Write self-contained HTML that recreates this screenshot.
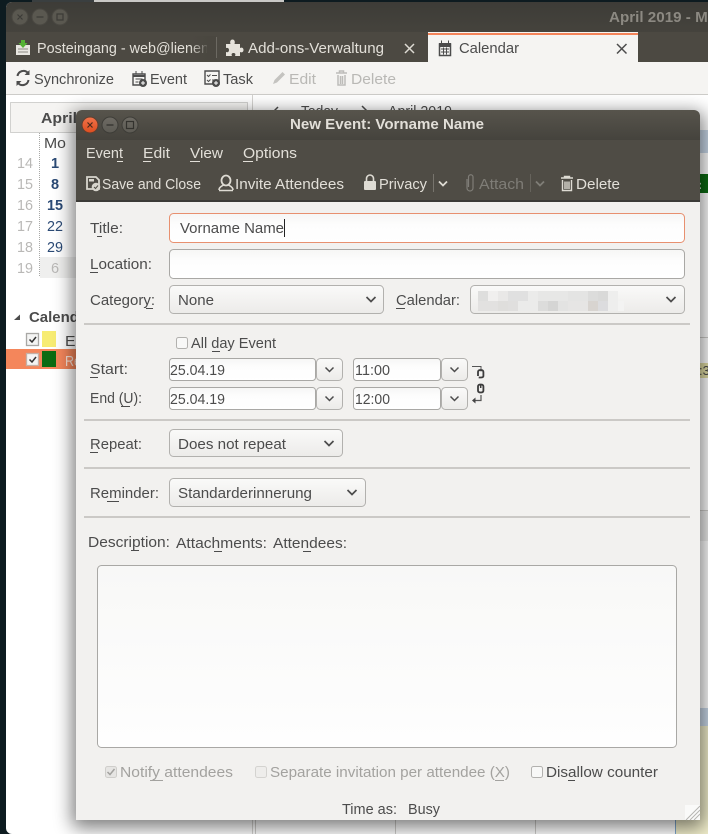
<!DOCTYPE html>
<html lang="en"><head><meta charset="utf-8"><title>New Event</title>
<style>
html,body{margin:0;padding:0;background:#0d1b20;width:708px;height:834px;overflow:hidden}
svg{display:block}
text{font-family:"Liberation Sans",sans-serif;font-size:14.5px;fill:#4c4c4c;white-space:pre}
.b{font-weight:bold}
.m{fill:#e2dfd8}
.d{fill:#a3a29f}
.dd{fill:#7f7d77}
.day{fill:#2b4a75}
.wk{fill:#b9b8b6}
.u{fill:#4c4c4c}
.um{fill:#e2dfd8}
.sep{fill:#cbc9c6}
.ic{fill:none;stroke:#4c4c4c;stroke-width:1.4}
.icm{fill:none;stroke:#dedbd3;stroke-width:1.4}
</style></head><body>
<svg width="708" height="834" viewBox="0 0 708 834" xmlns="http://www.w3.org/2000/svg">
<defs>
<linearGradient id="tb" x1="0" y1="0" x2="0" y2="1"><stop offset="0" stop-color="#57544c"/><stop offset="1" stop-color="#45433d"/></linearGradient>
<linearGradient id="tm" x1="0" y1="0" x2="0" y2="1"><stop offset="0" stop-color="#3d3c37"/><stop offset="1" stop-color="#45433d"/></linearGradient>
<linearGradient id="inp" x1="0" y1="0" x2="0" y2="1"><stop offset="0" stop-color="#f6f6f5"/><stop offset=".4" stop-color="#fdfdfd"/><stop offset="1" stop-color="#fff"/></linearGradient>
<linearGradient id="ta" x1="0" y1="0" x2="0" y2="1"><stop offset="0" stop-color="#f8f8f7"/><stop offset="1" stop-color="#fefefe"/></linearGradient>
<linearGradient id="btn" x1="0" y1="0" x2="0" y2="1"><stop offset="0" stop-color="#fafaf9"/><stop offset="1" stop-color="#ecebe9"/></linearGradient>
<linearGradient id="cl" x1="0" y1="0" x2="0" y2="1"><stop offset="0" stop-color="#f3734a"/><stop offset="1" stop-color="#dc4d1f"/></linearGradient>
<linearGradient id="gb" x1="0" y1="0" x2="0" y2="1"><stop offset="0" stop-color="#6e6b64"/><stop offset="1" stop-color="#5c5a53"/></linearGradient>
<linearGradient id="fade" x1="0" y1="0" x2="1" y2="0"><stop offset="0" stop-color="#4a4740" stop-opacity="0"/><stop offset="1" stop-color="#4a4740"/></linearGradient>
<filter id="sh" x="-10%" y="-10%" width="120%" height="120%"><feGaussianBlur stdDeviation="9"/></filter>
</defs>

<!-- desktop / main window -->
<rect width="708" height="834" fill="#0d1b20"/>
<rect x="32" y="0" width="62" height="2" fill="#3a3f40"/><rect x="94" y="0" width="190" height="2" fill="#c9c9c6"/>
<rect x="6" y="2" width="702" height="832" rx="6" fill="#fff"/>
<path d="M6 32V8a6 6 0 0 1 6-6H708V32Z" fill="url(#tm)"/>
<rect x="6" y="32" width="702" height="30" fill="#4c4942"/>
<g fill="#5a5850" stroke="#4a4842"><circle cx="20" cy="17" r="8"/><circle cx="40" cy="17" r="8"/><circle cx="60" cy="17" r="8"/></g>
<path d="M17.500 14.500l5 5M22.500 14.500l-5 5M36.500 17h7M57 14h6v6h-6z" fill="none" stroke="#3c3b37" stroke-width="1.200"/>
<text x="609" y="22" class="b" style="fill:#8c8982" textLength="108" lengthAdjust="spacingAndGlyphs">April 2019 - Mo</text>

<!-- tabs -->
<path d="M16 45h14v10H16z" fill="#e8e6e1"/><path d="M18 49h10M18 52h10" stroke="#8c8a84"/><path d="M21 40h4v3h2.500L23 48l-4.500-5H21z" fill="#55b235"/>
<text x="37" y="53" class="m" textLength="172" lengthAdjust="spacingAndGlyphs">Posteingang - web@lienen</text>
<rect x="190" y="36" width="20" height="24" fill="url(#fade)"/><rect x="207" y="36" width="9" height="24" fill="#4a4740"/>
<rect x="216" y="37" width="1" height="21" fill="#6c6962"/>
<path d="M226 44h4.500c-1-3 .5-4.500 2-4.500s3 1.500 2 4.500H240v4c2.500-1 3.500.5 3.500 2s-1 3-3.500 2v4h-5c1-2 0-3-1.500-3s-2.500 1-1.500 3H226v-4c2 .7 3-.3 3-2s-1-2.500-3-2z" fill="#e6e3dc"/>
<text x="248" y="53" class="m" textLength="136" lengthAdjust="spacingAndGlyphs">Add-ons-Verwaltung</text>
<path d="M405 44l9 9M414 44l-9 9" stroke="#dedbd3" stroke-width="1.500" fill="none"/>
<rect x="428" y="32" width="210" height="30" fill="#f5f4f2"/><rect x="428" y="33" width="210" height="2" fill="#f4845a"/>
<path d="M439.500 44h11v11.500h-11z" fill="none" stroke="#4c4c4c" stroke-width="1.500"/><rect x="439" y="43" width="12" height="4" fill="#4c4c4c"/><path d="M441 49h8M441 52h8M443.500 47.500v7M446.500 47.500v7M441.500 40.500v3M448.500 40.500v3" stroke="#4c4c4c" fill="none"/>
<text x="459" y="53" textLength="60" lengthAdjust="spacingAndGlyphs">Calendar</text>
<path d="M617 44l9.500 9.500M626.500 44l-9.500 9.500" stroke="#4c4c4c" stroke-width="1.500" fill="none"/>

<!-- main toolbar -->
<rect x="6" y="62" width="702" height="32" fill="#f5f4f2"/><rect x="6" y="94" width="702" height="1" fill="#cdccc9"/>
<path d="M17.500 76a6 6 0 0 1 10.500-3M28.500 80a6 6 0 0 1-10.500 3" class="ic" style="stroke-width:2"/><path d="M29.500 70v5h-5zM16.500 86v-5h5z" fill="#4c4c4c"/>
<text x="34" y="84" textLength="80" lengthAdjust="spacingAndGlyphs">Synchronize</text>
<path d="M133 74h12v11h-12z" class="ic"/><path d="M133 76h12" stroke="#4c4c4c" stroke-width="2"/><path d="M136 71v3M142 71v3M135.500 79h7M135.500 82h3" stroke="#4c4c4c"/><circle cx="143" cy="83" r="4" fill="#4c4c4c"/><path d="M141 83h4M143 81v4" stroke="#fff"/>
<text x="150" y="84" textLength="37" lengthAdjust="spacingAndGlyphs">Event</text>
<path d="M205 71h14v13h-14z" class="ic"/><path d="M207 75l1.500 1.500 2-2M212 75.500h5M207 80l1.500 1.500 2-2M212 80h3" stroke="#4c4c4c" fill="none"/><circle cx="216" cy="83" r="4" fill="#4c4c4c"/><path d="M214 83h4M216 81v4" stroke="#fff"/>
<text x="223" y="84" textLength="30" lengthAdjust="spacingAndGlyphs">Task</text>
<path d="M273 84l1.500-4 8-8 2.500 2.500-8 8z" fill="#c4c3c0"/>
<text x="289" y="84" style="fill:#b9b8b5" textLength="27" lengthAdjust="spacingAndGlyphs">Edit</text>
<path d="M336 73h11M338 75v10h7V75M340.500 76v8M342.500 76v8M339.500 73v-2h4v2" fill="none" stroke="#bdbcb9" stroke-width="1.500"/>
<text x="351" y="84" style="fill:#b9b8b5" textLength="45" lengthAdjust="spacingAndGlyphs">Delete</text>

<!-- sidebar -->
<rect x="252" y="95" width="1" height="739" fill="#d4d3d0"/>
<rect x="10.500" y="102.500" width="237" height="30" fill="#f5f4f2" stroke="#a8a8a6" stroke-dasharray="1 1"/>
<text x="41" y="123" class="b" textLength="36" lengthAdjust="spacingAndGlyphs">April</text>
<path d="M39.500 133V277" stroke="#a8a8a6" stroke-dasharray="1 1"/>
<rect x="40" y="257" width="40" height="21" fill="#efefee"/>
<text x="44" y="148" textLength="22" lengthAdjust="spacingAndGlyphs">Mo</text>
<text x="17" y="168" class="wk" textLength="16" lengthAdjust="spacingAndGlyphs">14</text>
<text x="17" y="189" class="wk" textLength="16" lengthAdjust="spacingAndGlyphs">15</text>
<text x="17" y="210" class="wk" textLength="16" lengthAdjust="spacingAndGlyphs">16</text>
<text x="17" y="231" class="wk" textLength="16" lengthAdjust="spacingAndGlyphs">17</text>
<text x="17" y="252" class="wk" textLength="16" lengthAdjust="spacingAndGlyphs">18</text>
<text x="17" y="273" class="wk" textLength="16" lengthAdjust="spacingAndGlyphs">19</text>
<text x="51" y="168" class="b day">1</text>
<text x="51" y="189" class="b day">8</text>
<text x="47" y="210" class="b day" textLength="16" lengthAdjust="spacingAndGlyphs">15</text>
<text x="47" y="231" class="day" textLength="16" lengthAdjust="spacingAndGlyphs">22</text>
<text x="47" y="252" class="day" textLength="16" lengthAdjust="spacingAndGlyphs">29</text>
<text x="51" y="273" class="wk">6</text>
<path d="M14 320l6-5.500V320z" fill="#4c4c4c"/>
<text x="29" y="322" class="b" textLength="64" lengthAdjust="spacingAndGlyphs">Calendar</text>
<rect x="26.500" y="333.500" width="12" height="12" fill="#f4f4f3" stroke="#a9a8a5" stroke-width="1.300"/>
<path d="M29.500 339.500l2.500 2.500 4-5" fill="none" stroke="#333" stroke-width="1.500"/>
<rect x="42" y="331" width="14" height="16" fill="#f7ec73"/>
<text x="65" y="346" textLength="14" lengthAdjust="spacingAndGlyphs">El</text>
<rect x="6" y="349" width="100" height="20" fill="#f4865b"/>
<rect x="26.500" y="353.500" width="12" height="12" fill="#f4f4f3" stroke="#c4b0a6" stroke-width="1.300"/>
<path d="M29.500 359.500l2.500 2.500 4-5" fill="none" stroke="#333" stroke-width="1.500"/>
<rect x="42" y="351" width="14" height="16" fill="#0b6b12"/>
<text x="65" y="366" style="fill:#fbe4d9" textLength="16" lengthAdjust="spacingAndGlyphs">Re</text>

<!-- calendar pane -->
<path d="M274 111l4-4M362 106l5 5-5 5" fill="none" stroke="#4c4c4c" stroke-width="1.500"/>
<text x="301" y="116" textLength="37" lengthAdjust="spacingAndGlyphs">Today</text>
<text x="388" y="116" textLength="64" lengthAdjust="spacingAndGlyphs">April 2019</text>
<rect x="253" y="130" width="455" height="23" fill="#c9d8e8"/>
<rect x="253" y="174" width="455" height="19" fill="#0b6b12"/>
<text x="698" y="189" style="fill:#e9efe6;font-size:12px" class="b">:</text>
<rect x="253" y="337" width="455" height="1" fill="#cfcecb"/>
<rect x="600" y="363" width="108" height="15" fill="#e3dfa6"/>
<text x="699" y="375" style="font-size:13px">:3</text>
<rect x="253" y="510" width="455" height="1" fill="#cfcecb"/>
<rect x="253" y="511" width="455" height="30" fill="#efefee"/>
<rect x="253" y="708" width="455" height="18" fill="#c9d8e8"/>
<rect x="676" y="726" width="32" height="108" fill="#f1eecb"/>
<path d="M255.500 700V834M395.500 700V834M535.500 700V834" stroke="#cfcecb"/>
<path d="M675.500 700V834" stroke="#7ea6cc"/>

<!-- dialog shadow -->
<rect x="72" y="112" width="632" height="716" rx="6" fill="#000" opacity=".5" filter="url(#sh)"/>

<!-- dialog -->
<path d="M76 820V116a6 6 0 0 1 6-6H694a6 6 0 0 1 6 6V820Z" fill="#f2f1ef"/>
<path d="M76 140V116a6 6 0 0 1 6-6H694a6 6 0 0 1 6 6V140Z" fill="url(#tb)"/>
<rect x="76" y="140" width="624" height="61" fill="#4f4c45"/>
<rect x="76" y="200" width="624" height="2" fill="#3c3b37"/>
<circle cx="90" cy="125" r="8" fill="url(#cl)" stroke="#5d3f31"/><path d="M87.500 122.500l5 5M92.500 122.500l-5 5" stroke="#4a2a1c" stroke-width="1.200"/>
<circle cx="110" cy="125" r="8" fill="url(#gb)" stroke="#3e3d38"/><path d="M106.500 125h7" stroke="#33322e" stroke-width="1.300"/>
<circle cx="130" cy="125" r="8" fill="url(#gb)" stroke="#3e3d38"/><rect x="126.500" y="121.500" width="7" height="7" fill="none" stroke="#33322e" stroke-width="1.200"/>
<text x="290" y="129" class="b m" textLength="194" lengthAdjust="spacingAndGlyphs">New Event: Vorname Name</text>

<text x="86" y="158" class="m" textLength="37" lengthAdjust="spacingAndGlyphs">Event</text><rect x="117" y="161" width="6" height="1" class="um"/>
<text x="143" y="158" class="m" textLength="27" lengthAdjust="spacingAndGlyphs">Edit</text><rect x="143" y="161" width="8" height="1" class="um"/>
<text x="190" y="158" class="m" textLength="33" lengthAdjust="spacingAndGlyphs">View</text><rect x="190" y="161" width="10" height="1" class="um"/>
<text x="243" y="158" class="m" textLength="54" lengthAdjust="spacingAndGlyphs">Options</text><rect x="243" y="161" width="10" height="1" class="um"/>

<path d="M87 177h9l3 3v9H87z" fill="none" stroke="#d8d5cd" stroke-width="1.800"/><rect x="89" y="179" width="5" height="2.500" fill="#d8d5cd"/><circle cx="96" cy="187" r="4.300" fill="#d8d5cd"/><path d="M94 187l1.500 1.500 2.500-3" stroke="#4f4c45" fill="none"/>
<text x="102" y="189" class="m" textLength="99" lengthAdjust="spacingAndGlyphs">Save and Close</text>
<ellipse cx="226" cy="180.500" rx="4.500" ry="5" class="icm" style="stroke-width:1.800"/><path d="M219 190c0-3 3-4 4.500-5M233 190c0-3-3-4-4.500-5M219 190.500h14" class="icm" style="stroke-width:1.600"/>
<text x="235" y="189" class="m" textLength="109" lengthAdjust="spacingAndGlyphs">Invite Attendees</text>
<rect x="364" y="181" width="12" height="9" rx="1" fill="#dedbd3"/><path d="M366.500 181v-2.500a3.500 3.500 0 0 1 7 0V181" fill="none" stroke="#dedbd3" stroke-width="1.600"/>
<text x="379" y="189" class="m" textLength="48" lengthAdjust="spacingAndGlyphs">Privacy</text>
<rect x="433" y="174" width="1" height="18" fill="#77746d"/>
<path d="M439 181.500l4 4 4-4" class="icm" style="stroke-width:1.800"/>
<path d="M467 179v9a3 3 0 0 0 6 0v-11a2.200 2.200 0 0 0-4.500 0v10" fill="none" stroke="#7f7d77" stroke-width="1.200"/>
<text x="479" y="189" class="dd" textLength="45" lengthAdjust="spacingAndGlyphs">Attach</text>
<rect x="530" y="174" width="1" height="18" fill="#66635c"/>
<path d="M536 181.500l4 4 4-4" fill="none" stroke="#7f7d77" stroke-width="1.800"/>
<path d="M561 178h12M562.500 180v10.500h9V180M565 181.500v7.500M567 181.500v7.500M569 181.500v7.500M564.500 178v-1.500h5v1.500" class="icm"/>
<text x="576" y="189" class="m" textLength="44" lengthAdjust="spacingAndGlyphs">Delete</text>

<!-- form -->
<text x="90" y="233" textLength="33" lengthAdjust="spacingAndGlyphs">Title:</text><rect x="97" y="236" width="5" height="1" class="u"/>
<rect x="169.500" y="213.500" width="515" height="29" rx="4" fill="url(#inp)" stroke="#e8906f"/>
<text x="180" y="233" textLength="104" lengthAdjust="spacingAndGlyphs">Vorname Name</text>
<rect x="284" y="219" width="1" height="18" fill="#222"/>

<text x="90" y="269" textLength="62" lengthAdjust="spacingAndGlyphs">Location:</text><rect x="90" y="272" width="8" height="1" class="u"/>
<rect x="169.500" y="249.500" width="515" height="29" rx="4" fill="url(#inp)" stroke="#a9a8a5"/>

<text x="90" y="305" textLength="65" lengthAdjust="spacingAndGlyphs">Category:</text><rect x="146" y="308" width="7" height="1" class="u"/>
<rect x="169.500" y="285.500" width="214" height="28" rx="4" fill="url(#btn)" stroke="#b2b1ae"/>
<text x="178" y="305" textLength="36" lengthAdjust="spacingAndGlyphs">None</text>
<path d="M366.500 297l4.500 4.500 4.500-4.500" fill="none" stroke="#4c4c4c" stroke-width="1.700"/>
<text x="396" y="305" textLength="64" lengthAdjust="spacingAndGlyphs">Calendar:</text><rect x="396" y="308" width="9" height="1" class="u"/>
<rect x="470.500" y="285.500" width="214" height="28" rx="4" fill="url(#btn)" stroke="#b2b1ae"/>
<g>
<rect x="478" y="291" width="10" height="10" fill="#dededd"/><rect x="488" y="291" width="10" height="10" fill="#f0efee"/><rect x="498" y="291" width="10" height="10" fill="#e9e8e7"/><rect x="508" y="291" width="20" height="10" fill="#e0e0e0"/><rect x="528" y="291" width="10" height="10" fill="#ebebea"/><rect x="538" y="291" width="30" height="10" fill="#e7e7e6"/><rect x="568" y="291" width="20" height="10" fill="#e4e4e3"/><rect x="588" y="291" width="10" height="10" fill="#dcdcdb"/><rect x="598" y="291" width="10" height="10" fill="#d9d9d8"/><rect x="608" y="291" width="10" height="10" fill="#eeeeed"/>
<rect x="478" y="301" width="20" height="10" fill="#e2e1e0"/><rect x="498" y="301" width="10" height="10" fill="#dfdedc"/><rect x="508" y="301" width="10" height="10" fill="#e0dfde"/><rect x="518" y="301" width="20" height="10" fill="#ebebea"/><rect x="538" y="301" width="10" height="10" fill="#dcdcdb"/><rect x="548" y="301" width="10" height="10" fill="#d5d5d4"/><rect x="558" y="301" width="10" height="10" fill="#e3e3e2"/><rect x="568" y="301" width="20" height="10" fill="#e6e5e4"/><rect x="588" y="301" width="10" height="10" fill="#d8d4d0"/><rect x="598" y="301" width="10" height="10" fill="#dcdcde"/><rect x="608" y="301" width="10" height="10" fill="#eeeeed"/><rect x="618" y="301" width="6" height="10" fill="#f3f3f2"/>
</g>
<path d="M666.500 297l4.500 4.500 4.500-4.500" fill="none" stroke="#4c4c4c" stroke-width="1.700"/>

<rect x="84" y="323" width="606" height="2" class="sep"/>

<rect x="176.500" y="337.500" width="11" height="11" rx="2" fill="#f8f8f7" stroke="#b2b1ae"/>
<text x="191" y="348" textLength="85" lengthAdjust="spacingAndGlyphs">All day Event</text><rect x="212" y="351" width="8" height="1" class="u"/>

<text x="90" y="374" textLength="38" lengthAdjust="spacingAndGlyphs">Start:</text><rect x="90" y="377" width="8" height="1" class="u"/>
<rect x="169.500" y="358.500" width="146" height="22" rx="3" fill="url(#inp)" stroke="#a9a8a5"/>
<text x="170" y="375" textLength="55" lengthAdjust="spacingAndGlyphs">25.04.19</text>
<rect x="316.500" y="358.500" width="26" height="22" rx="4" fill="url(#btn)" stroke="#b2b1ae"/>
<path d="M325.500 367.500l4 4 4-4" fill="none" stroke="#4c4c4c" stroke-width="1.500"/>
<rect x="353.500" y="358.500" width="87" height="22" rx="3" fill="url(#inp)" stroke="#a9a8a5"/>
<text x="355" y="375" textLength="35" lengthAdjust="spacingAndGlyphs">11:00</text>
<rect x="441.500" y="358.500" width="26" height="22" rx="4" fill="url(#btn)" stroke="#b2b1ae"/>
<path d="M450.500 367.500l4 4 4-4" fill="none" stroke="#4c4c4c" stroke-width="1.500"/>

<text x="90" y="403" textLength="52" lengthAdjust="spacingAndGlyphs">End (U):</text><rect x="121" y="406" width="9" height="1" class="u"/>
<rect x="169.500" y="387.500" width="146" height="22" rx="3" fill="url(#inp)" stroke="#a9a8a5"/>
<text x="170" y="404" textLength="55" lengthAdjust="spacingAndGlyphs">25.04.19</text>
<rect x="316.500" y="387.500" width="26" height="22" rx="4" fill="url(#btn)" stroke="#b2b1ae"/>
<path d="M325.500 396.500l4 4 4-4" fill="none" stroke="#4c4c4c" stroke-width="1.500"/>
<rect x="353.500" y="387.500" width="87" height="22" rx="3" fill="url(#inp)" stroke="#a9a8a5"/>
<text x="355" y="404" textLength="35" lengthAdjust="spacingAndGlyphs">12:00</text>
<rect x="441.500" y="387.500" width="26" height="22" rx="4" fill="url(#btn)" stroke="#b2b1ae"/>
<path d="M450.500 396.500l4 4 4-4" fill="none" stroke="#4c4c4c" stroke-width="1.500"/>

<!-- chain link icon -->
<path d="M472 366.500h9v5" fill="none" stroke="#555" stroke-width="1"/>
<path d="M478 376v-4q0-2 2.700-2t2.700 2v4q0 1.500-2.700 1.500h-2" fill="none" stroke="#3c3c3c" stroke-width="1.800"/>
<path d="M478 386.500v4q0 2 2.700 2t2.700-2v-4q0-2-2.700-2t-2.700 2z" fill="none" stroke="#3c3c3c" stroke-width="1.800"/>
<path d="M480.700 384v4" stroke="#3c3c3c" stroke-width="1.500"/>
<path d="M481 395v5.500h-7" fill="none" stroke="#555" stroke-width="1.200"/><path d="M472 400.500l3.500-3v6z" fill="#444"/>

<rect x="84" y="419" width="606" height="2" class="sep"/>

<text x="90" y="449" textLength="52" lengthAdjust="spacingAndGlyphs">Repeat:</text><rect x="90" y="452" width="8" height="1" class="u"/>
<rect x="169.500" y="429.500" width="173" height="27" rx="4" fill="url(#btn)" stroke="#b2b1ae"/>
<text x="178" y="449" textLength="108" lengthAdjust="spacingAndGlyphs">Does not repeat</text>
<path d="M324.500 441l4.500 4.500 4.500-4.500" fill="none" stroke="#4c4c4c" stroke-width="1.700"/>

<rect x="84" y="467" width="606" height="2" class="sep"/>

<text x="90" y="498" textLength="69" lengthAdjust="spacingAndGlyphs">Reminder:</text><rect x="107" y="501" width="12" height="1" class="u"/>
<rect x="169.500" y="478.500" width="196" height="28" rx="4" fill="url(#btn)" stroke="#b2b1ae"/>
<text x="178" y="498" textLength="134" lengthAdjust="spacingAndGlyphs">Standarderinnerung</text>
<path d="M347.500 490l4.500 4.500 4.500-4.500" fill="none" stroke="#4c4c4c" stroke-width="1.700"/>

<rect x="84" y="516" width="606" height="2" class="sep"/>

<text x="88" y="547" textLength="82" lengthAdjust="spacingAndGlyphs">Description:</text><rect x="131" y="550" width="8" height="1" class="u"/>
<text x="176" y="548" textLength="91" lengthAdjust="spacingAndGlyphs">Attachments:</text><rect x="214" y="551" width="8" height="1" class="u"/>
<text x="273" y="548" textLength="74" lengthAdjust="spacingAndGlyphs">Attendees:</text><rect x="303" y="551" width="8" height="1" class="u"/>

<rect x="97.500" y="565.500" width="579" height="182" rx="4" fill="url(#ta)" stroke="#a9a8a5"/>

<rect x="105.500" y="766.500" width="11" height="11" rx="2" fill="#e6e5e3" stroke="#cfcecb"/>
<path d="M107.500 772l2.500 2.500 4.500-5.500" fill="none" stroke="#a3a29f" stroke-width="1.500"/>
<text x="120" y="777" class="d" textLength="113" lengthAdjust="spacingAndGlyphs">Notify attendees</text><rect x="150" y="780" width="13" height="1" fill="#a3a29f"/>
<rect x="255.500" y="766.500" width="11" height="11" rx="2" fill="#eeedeb" stroke="#d4d3d0"/>
<text x="270" y="777" class="d" textLength="240" lengthAdjust="spacingAndGlyphs">Separate invitation per attendee (X)</text><rect x="495" y="780" width="9" height="1" fill="#a3a29f"/>
<rect x="531.500" y="766.500" width="11" height="11" rx="2" fill="#f8f8f7" stroke="#b2b1ae"/>
<text x="546" y="777" textLength="112" lengthAdjust="spacingAndGlyphs">Disallow counter</text><rect x="568" y="780" width="7" height="1" class="u"/>

<text x="342" y="814" textLength="55" lengthAdjust="spacingAndGlyphs">Time as:</text>
<text x="408" y="814" textLength="32" lengthAdjust="spacingAndGlyphs">Busy</text>

<rect x="685" y="805" width="15" height="15" fill="#fafaf9"/>
<path d="M686 820l14-14M690 820l10-10M694 820l6-6" stroke="#b5b4b1" fill="none"/>
</svg>
</body></html>
